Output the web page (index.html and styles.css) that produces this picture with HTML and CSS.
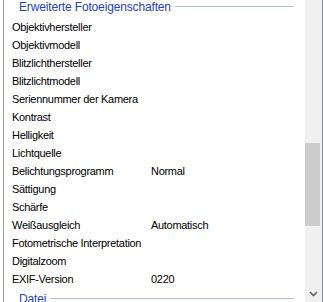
FILE: index.html
```html
<!DOCTYPE html>
<html>
<head>
<meta charset="utf-8">
<link rel="stylesheet" href="styles.css">
</head>
<body>
<div class="panel">
  <div class="content">
    <div class="group-header"><span class="group-title">Erweiterte Fotoeigenschaften</span><span class="group-line"></span></div>
    <div class="row"><span class="label">Objektivhersteller</span><span class="value"></span></div>
    <div class="row"><span class="label">Objektivmodell</span><span class="value"></span></div>
    <div class="row"><span class="label">Blitzlichthersteller</span><span class="value"></span></div>
    <div class="row"><span class="label">Blitzlichtmodell</span><span class="value"></span></div>
    <div class="row"><span class="label">Seriennummer der Kamera</span><span class="value"></span></div>
    <div class="row"><span class="label">Kontrast</span><span class="value"></span></div>
    <div class="row"><span class="label">Helligkeit</span><span class="value"></span></div>
    <div class="row"><span class="label">Lichtquelle</span><span class="value"></span></div>
    <div class="row"><span class="label">Belichtungsprogramm</span><span class="value">Normal</span></div>
    <div class="row"><span class="label">Sättigung</span><span class="value"></span></div>
    <div class="row"><span class="label">Schärfe</span><span class="value"></span></div>
    <div class="row"><span class="label">Weißausgleich</span><span class="value">Automatisch</span></div>
    <div class="row"><span class="label">Fotometrische Interpretation</span><span class="value"></span></div>
    <div class="row"><span class="label">Digitalzoom</span><span class="value"></span></div>
    <div class="row"><span class="label">EXIF-Version</span><span class="value">0220</span></div>
    <div class="group-header group-next"><span class="group-title">Datei</span><span class="group-line"></span></div>
  </div>
  <div class="scrollbar">
    <div class="track-top"></div>
    <div class="thumb"></div>
    <div class="track-bottom"></div>
    <div class="arrow">
      <svg width="9" height="6" viewBox="0 0 9 6"><path d="M1 1 L4.5 4.5 L8 1" fill="none" stroke="#606060" stroke-width="1.6"/></svg>
    </div>
  </div>
</div>
</body>
</html>
```

FILE: styles.css
```css
html, body {
  margin: 0;
  padding: 0;
  background: #ffffff;
}
body {
  width: 323px;
  height: 302px;
  overflow: hidden;
  font-family: "Liberation Sans", Arial, sans-serif;
  font-size: 11px;
  letter-spacing: -0.3px;
  color: #000000;
}
.panel {
  display: flex;
  width: 323px;
  height: 302px;
  overflow: hidden;
}
.content {
  flex: 1;
  margin-left: 3px;
  border-left: 1px solid #a0a0a0;
  padding-left: 8px;
  padding-right: 11px;
  display: flex;
  flex-direction: column;
  overflow: hidden;
}
.group-header {
  flex: none;
  height: 18px;
  display: flex;
  align-items: flex-start;
  padding-left: 7px;
}
.group-next {
  margin-top: 4px;
}
.group-title {
  color: #1f3fc4;
  line-height: 14px;
  font-size: 12px;
  letter-spacing: -0.15px;
  white-space: nowrap;
}
.group-line {
  flex: 1;
  height: 1px;
  margin-top: 6px;
  margin-left: 4px;
  background: #b3c0e6;
}
.row {
  flex: none;
  height: 18px;
  display: flex;
  align-items: center;
  white-space: nowrap;
}
.label {
  width: 139px;
  flex: none;
}
.value {
  flex: 1;
}
.scrollbar {
  flex: none;
  width: 17px;
  background: #f0f0f0;
  border-right: 1px solid #8a8a96;
  display: flex;
  flex-direction: column;
  position: relative;
}
.track-top {
  height: 143px;
}
.thumb {
  height: 83px;
  width: 15px;
  background: #cdcdcd;
}
.track-bottom {
  flex: 1;
}
.arrow {
  height: 17px;
  display: flex;
  align-items: center;
  justify-content: center;
}
```
